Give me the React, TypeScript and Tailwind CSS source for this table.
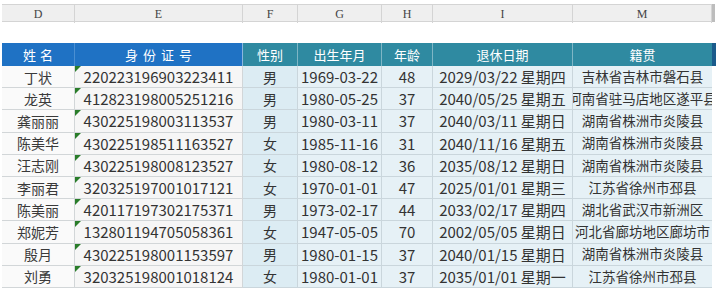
const cols = "grid grid-cols-[73px_168px_55px_84px_51px_140px_139px]";

const rows = [
  ["丁状", "220223196903223411", "男", "1969-03-22", "48", "2029/03/22 星期四", "吉林省吉林市磐石县"],
  ["龙英", "412823198005251216", "男", "1980-05-25", "37", "2040/05/25 星期五", "河南省驻马店地区遂平县"],
  ["龚丽丽", "430225198003113537", "男", "1980-03-11", "37", "2040/03/11 星期日", "湖南省株洲市炎陵县"],
  ["陈美华", "430225198511163527", "女", "1985-11-16", "31", "2040/11/16 星期五", "湖南省株洲市炎陵县"],
  ["汪志刚", "430225198008123527", "女", "1980-08-12", "36", "2035/08/12 星期日", "湖南省株洲市炎陵县"],
  ["李丽君", "320325197001017121", "女", "1970-01-01", "47", "2025/01/01 星期三", "江苏省徐州市邳县"],
  ["陈美丽", "420117197302175371", "男", "1973-02-17", "44", "2033/02/17 星期四", "湖北省武汉市新洲区"],
  ["郑妮芳", "132801194705058361", "女", "1947-05-05", "70", "2002/05/05 星期日", "河北省廊坊地区廊坊市"],
  ["殷月", "430225198001153597", "男", "1980-01-15", "37", "2040/01/15 星期日", "湖南省株洲市炎陵县"],
  ["刘勇", "320325198001018124", "女", "1980-01-01", "37", "2035/01/01 星期一", "江苏省徐州市邳县"],
];

const letters = ["D", "E", "F", "G", "H", "I", "M"];

export default function App() {
  return (
    <div className="w-[720px] h-[302px] bg-white overflow-hidden pt-[4px] pl-[2px] font-['Noto_Sans_CJK_SC',sans-serif] text-[#333]">
      {/* column letters */}
      <div className="flex">
        <div className={`${cols} h-[18px] bg-[#efefef] border-y border-[#d4d4d4]`}>
          {letters.map((l) => (
            <div
              key={l}
              className="flex items-center justify-center border-r border-[#d4d4d4] text-[12px] text-[#444] font-['Liberation_Serif',serif]"
            >
              {l}
            </div>
          ))}
        </div>
        <div className="w-[3px] h-[18px] bg-[#bdbdbd]" />
      </div>

      {/* table */}
      <div className="mt-[21px] flex">
        <div>
          <div className={`${cols} h-[23px] text-white text-[13px]`}>
            <div className="flex items-center justify-center bg-[#1f72c4] border-r border-[#4a8fd2] tracking-[4px] pl-[4px]">姓名</div>
            <div className="flex items-center justify-center bg-[#1f72c4] border-r border-[#8ab6df] tracking-[5px] pl-[5px]">身份证号</div>
            <div className="flex items-center justify-center bg-[#2f8aa1] border-r border-[#7fb6c5]">性别</div>
            <div className="flex items-center justify-center bg-[#2f8aa1] border-r border-[#7fb6c5]">出生年月</div>
            <div className="flex items-center justify-center bg-[#2f8aa1] border-r border-[#7fb6c5]">年龄</div>
            <div className="flex items-center justify-center bg-[#2f8aa1] border-r border-[#7fb6c5]">退休日期</div>
            <div className="flex items-center justify-center bg-[#2f8aa1]">籍贯</div>
          </div>
          {rows.map((r) => (
            <div key={r[1]} className={`${cols} h-[22.2px] text-[14px] leading-none`}>
              <div className="flex items-center justify-center bg-[#fafafa] border-b border-r border-[#d2d6d8] text-[#3a3a3a]">{r[0]}</div>
              <div className="relative flex items-center justify-center bg-[#f6f6f6] border-b border-r border-[#d2d6d8] text-[15px]">
                <span className="absolute left-0 top-0 w-0 h-0 border-t-[6px] border-r-[6px] border-t-[#2a7d2a] border-r-transparent" />
                {r[1]}
              </div>
              <div className="flex items-center justify-center bg-[#dcecf3] border-b border-r border-[#cad6dc]">{r[2]}</div>
              <div className="flex items-center justify-center bg-[#e6f1f6] border-b border-r border-[#cad6dc] text-[15px]">{r[3]}</div>
              <div className="flex items-center justify-center bg-[#e6f1f6] border-b border-r border-[#cad6dc] text-[15px]">{r[4]}</div>
              <div className="flex items-center justify-center bg-[#e6f1f6] border-b border-r border-[#cad6dc] text-[15px] whitespace-nowrap">{r[5]}</div>
              <div className="flex items-center justify-center overflow-hidden whitespace-nowrap bg-[#e6f1f6] border-b border-[#cad6dc] text-[13.5px]">{r[6]}</div>
            </div>
          ))}
        </div>
        <div className="w-[4px] h-[23px] bg-[#1b5b8c]" />
      </div>
    </div>
  );
}
